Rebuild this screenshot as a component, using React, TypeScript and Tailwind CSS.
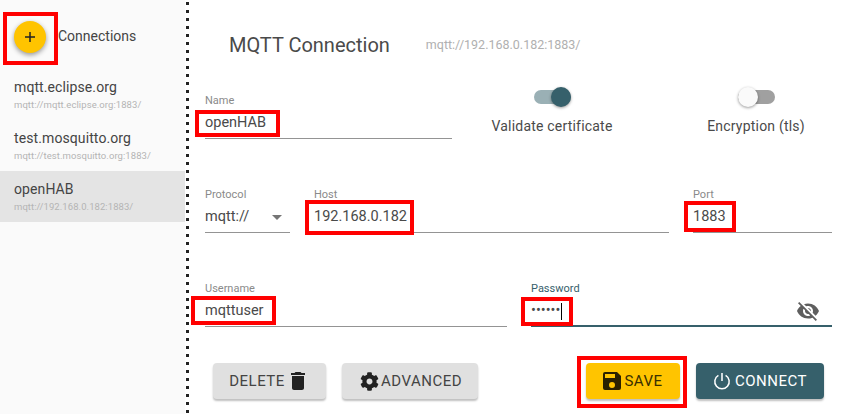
import type { ReactNode } from 'react';
import { FaCog } from 'react-icons/fa';

const font = "font-['Roboto',sans-serif]";

function Field({ label, value, className = '', active = false, children }: { label: string; value: string; className?: string; active?: boolean; children?: ReactNode }) {
  return (
    <div className={`flex flex-col ${className}`}>
      <span className={`text-[11px] leading-[13px] ${active ? 'text-[#36606b]' : 'text-[#8a8a8a]'}`}>{label}</span>
      <div className={`flex items-center justify-between h-[32px] pt-px ${active ? 'border-b-2 border-[#36606b]' : 'border-b border-[#949494]'}`}>
        <span className="text-[14.5px] text-[#4a4a4a]">{value}</span>
        {children}
      </div>
    </div>
  );
}

function Toggle({ on, label, className = '' }: { on: boolean; label: string; className?: string }) {
  return (
    <div className={`flex flex-col items-center ${className}`}>
      <div className={`relative w-[37px] h-[14px] rounded-full ${on ? 'bg-[#9ab0b5]' : 'bg-[#a0a0a0]'}`}>
        <span className={`absolute top-[-3px] w-5 h-5 rounded-full shadow-[0_1px_3px_rgba(0,0,0,0.4)] ${on ? 'right-0 bg-[#36606b]' : 'left-0 bg-[#fafafa]'}`} />
      </div>
      <span className="mt-[12px] text-[14px] leading-[20px] text-[#4a4a4a] tracking-[0.2px]">{label}</span>
    </div>
  );
}

function Btn({ className, children }: { className: string; children: ReactNode }) {
  return (
    <button type="button" className={`h-9 rounded flex items-center justify-center text-[15px] tracking-[0.5px] shadow-[0_2px_2px_rgba(0,0,0,0.25)] ${className}`}>
      {children}
    </button>
  );
}

function Conn({ name, url, selected }: { name: string; url: string; selected?: boolean }) {
  return (
    <div className={`h-[51px] pl-[14px] pb-px flex flex-col justify-center ${selected ? 'bg-[#e4e4e4]' : ''}`}>
      <span className="text-[14px] leading-[22px] text-[#444] tracking-[0.1px]">{name}</span>
      <span className="text-[9.5px] leading-[14px] text-[#b4b4b4] tracking-[0.07px]">{url}</span>
    </div>
  );
}

function Mark({ className }: { className: string }) {
  return <div className={`absolute border-[4px] border-[#f00] ${className}`} />;
}

export default function App() {
  return (
    <div className={`relative flex w-[842px] h-[414px] overflow-hidden bg-white ${font}`}>
      <aside className="w-[185px] shrink-0 bg-[#fafafa]">
        <div className="h-[69px] flex items-center pl-[14px] pt-[4px]">
          <div className="w-8 h-8 rounded-full bg-[#ffc400] flex items-center justify-center shadow-[0_2px_5px_rgba(0,0,0,0.4)]">
            <svg width="10" height="10" viewBox="0 0 10 10"><path d="M5 0v10M0 5h10" stroke="#222" strokeWidth="1.5" /></svg>
          </div>
          <span className="ml-3 text-[14px] text-[#444]">Connections</span>
        </div>
        <Conn name="mqtt.eclipse.org" url="mqtt://mqtt.eclipse.org:1883/" />
        <Conn name="test.mosquitto.org" url="mqtt://test.mosquitto.org:1883/" />
        <Conn name="openHAB" url="mqtt://192.168.0.182:1883/" selected />
      </aside>
      <div className="w-[3px] ml-px shrink-0 bg-[repeating-linear-gradient(to_bottom,transparent_0,transparent_2px,#222_2px,#222_5px,transparent_5px,transparent_8px)]" />
      <main className="flex-1 flex flex-col pl-[16px] pr-[10px]">
        <div className="h-[94px] pl-6 pt-[32px]">
          <div className="flex items-center">
            <h1 className="text-[20px] leading-[26px] text-[#4a4a4a]">MQTT Connection</h1>
            <span className="ml-9 text-[12.5px] text-[#b0b0b0]">mqtt://192.168.0.182:1883/</span>
          </div>
        </div>
        <div className="flex">
          <Field label="Name" value="openHAB" className="w-[247px]" />
          <Toggle on label="Validate certificate" className="w-[200px] mt-[-4px]" />
          <Toggle on={false} label="Encryption (tls)" className="w-[176px] mt-[-4px] ml-[16px]" />
        </div>
        <div className="flex mt-[49px]">
          <Field label="Protocol" value="mqtt://" className="w-[85px]">
            <svg width="10" height="5" viewBox="0 0 10 5" className="mr-[8px]"><path d="M0 0h10L5 5z" fill="#757575" /></svg>
          </Field>
          <Field label="Host" value="192.168.0.182" className="w-[355px] ml-6" />
          <Field label="Port" value="1883" className="w-[139px] ml-6" />
        </div>
        <div className="flex mt-[49px]">
          <Field label="Username" value="mqttuser" className="w-[302px]" />
          <Field label="Password" value="••••••" active className="w-[301px] ml-6">
            <svg width="24" height="24" viewBox="0 0 24 24" fill="#5f5f5f" className="mr-[12px]">
              <path d="M12 7c2.76 0 5 2.24 5 5 0 .65-.13 1.26-.36 1.83l2.92 2.92c1.51-1.26 2.7-2.89 3.43-4.75-1.73-4.39-6-7.5-11-7.5-1.4 0-2.74.25-3.98.7l2.16 2.16C10.74 7.13 11.35 7 12 7zM2 4.27l2.28 2.28.46.46C3.08 8.3 1.78 10.02 1 12c1.73 4.39 6 7.5 11 7.5 1.55 0 3.03-.3 4.38-.84l.42.42L19.73 22 21 20.73 3.27 3 2 4.27zM7.53 9.8l1.55 1.55c-.05.21-.08.43-.08.65 0 1.66 1.34 3 3 3 .22 0 .44-.03.65-.08l1.55 1.55c-.67.33-1.41.53-2.2.53-2.76 0-5-2.24-5-5 0-.79.2-1.53.53-2.2zm4.31-.78l3.15 3.15.02-.16c0-1.66-1.34-3-3-3l-.17.01z" />
            </svg>
          </Field>
        </div>
        <div className="flex mt-[36px] pl-2">
          <Btn className="w-[113px] bg-[#e0e0e0] text-[#444]">
            DELETE
            <svg width="24" height="24" viewBox="0 0 24 24" fill="#222" className="ml-[1px]">
              <path d="M6 19c0 1.1.9 2 2 2h8c1.1 0 2-.9 2-2V7H6v12zM19 4h-3.5l-1-1h-5l-1 1H5v2h14V4z" />
            </svg>
          </Btn>
          <Btn className="w-[136px] ml-4 bg-[#e0e0e0] text-[#444]">
            <FaCog size={19} color="#222" className="ml-[2px] mr-[2px]" />
            ADVANCED
          </Btn>
          <Btn className="w-[94px] ml-[108px] bg-[#ffc400] text-[#3a3000]">
            <svg width="18" height="18" viewBox="3 3 18 18" fill="#2a2000"><path d="M17 3H5a2 2 0 0 0-2 2v14a2 2 0 0 0 2 2h14a2 2 0 0 0 2-2V7l-4-4zm-5 16a3 3 0 1 1 0-6 3 3 0 0 1 0 6zm3-10H5V5h10v4z" /></svg>
            <span className="ml-[3px]">SAVE</span>
          </Btn>
          <Btn className="w-[128px] ml-4 bg-[#36606b] text-white">
            <svg width="18" height="18" viewBox="0 0 20 20" fill="none" stroke="#fff" strokeWidth="1.7"><path d="M10 1v9M6 3.8a8 8 0 1 0 8 0" /></svg>
            <span className="ml-[4px]">CONNECT</span>
          </Btn>
        </div>
      </main>
      <Mark className="left-[3px] top-[12px] w-[55px] h-[53px]" />
      <Mark className="left-[195px] top-[110px] w-[85px] h-[27px]" />
      <Mark className="left-[305px] top-[200px] w-[109px] h-[35px]" />
      <Mark className="left-[684px] top-[201px] w-[52px] h-[31px]" />
      <Mark className="left-[191px] top-[296px] w-[85px] h-[29px]" />
      <Mark className="left-[521px] top-[297px] w-[52px] h-[29px]" />
      <Mark className="left-[577px] top-[356px] w-[110px] h-[52px]" />
      <div className="absolute left-[561px] top-[303px] w-px h-[17px] bg-black" />
    </div>
  );
}
